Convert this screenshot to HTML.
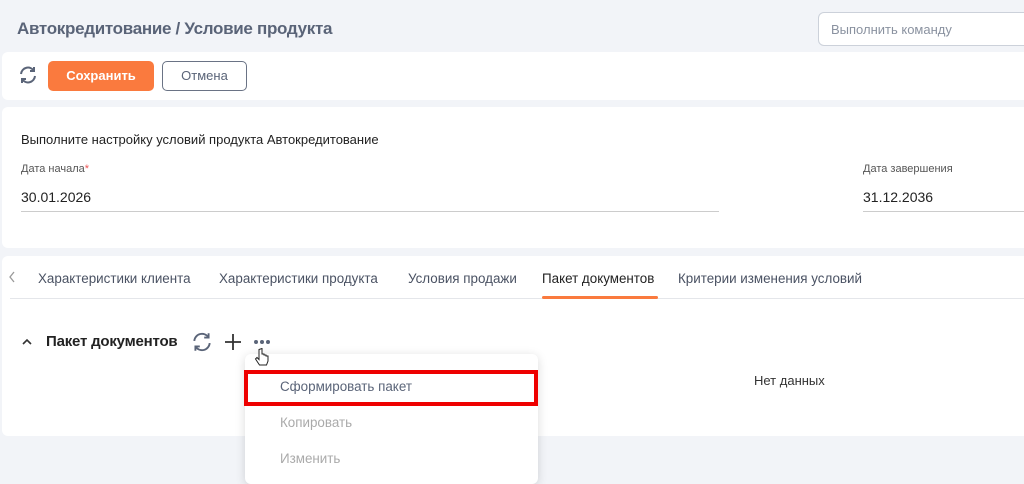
<!DOCTYPE html>
<html><head><meta charset="utf-8"><style>
*{box-sizing:border-box;margin:0;padding:0}
body{width:1024px;height:478px;overflow:hidden;background:#f2f4f8;font-family:"Liberation Sans",sans-serif;position:relative;color:#222}
.abs{position:absolute}
.card{position:absolute;background:#fff;border-radius:6px}
</style></head><body>
<div class="abs" style="left:17px;top:19px;font-size:17px;font-weight:bold;color:#5a6478;letter-spacing:-0.3px">Автокредитование / Условие продукта</div>
<div class="abs" style="left:818px;top:12px;width:230px;height:34px;border:1px solid #ccd1da;border-radius:6px;background:#fff;font-size:13px;color:#8a92a0;padding:9px 0 0 12px">Выполнить команду</div>

<div class="card" style="left:2px;top:52px;width:1030px;height:48px"></div>
<svg class="abs" style="left:18px;top:65px" width="20" height="20" viewBox="0 0 20 20" fill="none" stroke="#5a6478" stroke-width="2"><path d="M3 9a7 7 0 0 1 13-3"/><path d="M17 11a7 7 0 0 1-13 3"/><path d="M16 2v4h-4"/><path d="M4 18v-4h4"/></svg>
<div class="abs" style="left:48px;top:61px;width:106px;height:30px;background:#fa7a3e;border-radius:5px;color:#fff;font-size:13px;font-weight:bold;text-align:center;line-height:30px">Сохранить</div>
<div class="abs" style="left:162px;top:61px;width:85px;height:30px;border:1px solid #6a7385;border-radius:5px;color:#5a6478;font-size:13px;text-align:center;line-height:28px">Отмена</div>

<div class="card" style="left:2px;top:107px;width:1030px;height:141px"></div>
<div class="abs" style="left:21px;top:132px;font-size:13px;color:#222">Выполните настройку условий продукта Автокредитование</div>
<div class="abs" style="left:21px;top:163px;font-size:11px;color:#555">Дата начала<span style="color:#e55">*</span></div>
<div class="abs" style="left:21px;top:189px;font-size:14px;color:#222">30.01.2026</div>
<div class="abs" style="left:21px;top:211px;width:698px;height:1px;background:#ccc"></div>
<div class="abs" style="left:863px;top:163px;font-size:11px;color:#555">Дата завершения</div>
<div class="abs" style="left:863px;top:189px;font-size:14px;color:#222">31.12.2036</div>
<div class="abs" style="left:863px;top:211px;width:170px;height:1px;background:#ccc"></div>

<div class="card" style="left:2px;top:256px;width:1030px;height:180px"></div>
<svg class="abs" style="left:8px;top:271px" width="8" height="12" viewBox="0 0 8 12" fill="none" stroke="#999" stroke-width="1.3"><path d="M6 1L2 6l4 5"/></svg>
<div class="abs" style="left:0;top:271px;font-size:13.4px;color:#4a5263;white-space:nowrap;letter-spacing:0">
<span class="abs" style="left:38px">Характеристики клиента</span>
<span class="abs" style="left:219px">Характеристики продукта</span>
<span class="abs" style="left:408px">Условия продажи</span>
<span class="abs" style="left:542px;color:#222">Пакет документов</span>
<span class="abs" style="left:678px">Критерии изменения условий</span>
</div>
<div class="abs" style="left:10px;top:298px;width:1024px;height:1px;background:#e4e6ea"></div>
<div class="abs" style="left:542px;top:296px;width:116px;height:3px;background:#fa7a3e;border-radius:2px"></div>

<svg class="abs" style="left:21px;top:337px" width="12" height="10" viewBox="0 0 12 10" fill="none" stroke="#333" stroke-width="1.6"><path d="M2 7l4-4 4 4"/></svg>
<div class="abs" style="left:46px;top:333px;font-size:15px;font-weight:bold;color:#222;letter-spacing:-0.2px">Пакет документов</div>
<svg class="abs" style="left:191px;top:331px" width="22" height="22" viewBox="0 0 20 20" fill="none" stroke="#5a6478" stroke-width="1.7"><path d="M3 9a7 7 0 0 1 13-3"/><path d="M17 11a7 7 0 0 1-13 3"/><path d="M16 2v4h-4"/><path d="M4 18v-4h4"/></svg>
<svg class="abs" style="left:224px;top:333px" width="18" height="18" viewBox="0 0 18 18" stroke="#333" stroke-width="1.8"><path d="M9 1v16M1 9h16"/></svg>
<div class="abs" style="left:254px;top:340px;width:16px;height:4px">
<span class="abs" style="left:0;width:4px;height:4px;border-radius:2px;background:#5a6478"></span>
<span class="abs" style="left:6px;width:4px;height:4px;border-radius:2px;background:#5a6478"></span>
<span class="abs" style="left:12px;width:4px;height:4px;border-radius:2px;background:#5a6478"></span></div>
<div class="abs" style="left:754px;top:373px;font-size:13px;color:#333">Нет данных</div>

<div class="abs" style="left:245px;top:354px;width:293px;height:130px;background:#fff;border-radius:6px;box-shadow:0 2px 10px rgba(0,0,0,0.15)"></div>
<div class="abs" style="left:244px;top:370px;width:294px;height:36px;border:4px solid #ee0000"></div>
<div class="abs" style="left:280px;top:379px;font-size:13.4px;color:#5a6478">Сформировать пакет</div>
<div class="abs" style="left:280px;top:415px;font-size:13.4px;color:#aaa">Копировать</div>
<div class="abs" style="left:280px;top:451px;font-size:13.4px;color:#aaa">Изменить</div>
<svg class="abs" style="left:254px;top:348px" width="16" height="20" viewBox="0 0 16 20" fill="#fff" stroke="#222" stroke-width="1"><path d="M5 1.5v10l-2-2-1.5 1.5 4 6h7l1.5-4v-5h-2v-1h-2v-1h-2v-5.5z"/></svg>
</body></html>
